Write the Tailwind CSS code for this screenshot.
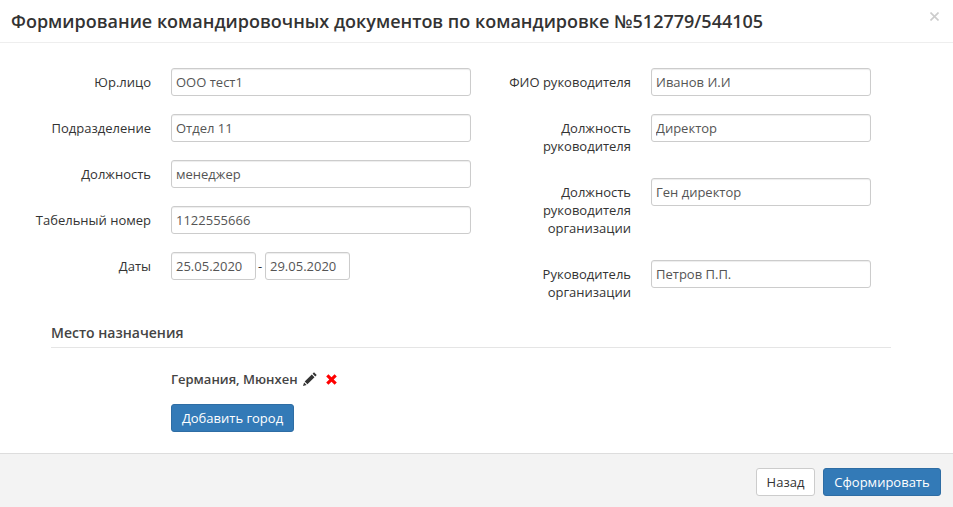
<!DOCTYPE html>
<html lang="ru">
<head>
    <meta charset="UTF-8">
    <title>Формирование командировочных документов</title>
    <script src="https://cdn.jsdelivr.net/npm/@tailwindcss/browser@4"></script>
</head>
<body class="bg-white font-['Open_Sans',sans-serif] text-[13px] leading-[18px] text-[#333] h-[507px] overflow-hidden">
    <!-- header -->
    <div class="flex justify-between h-[43px] border-b border-[#eeeeee] pl-[11px] pr-[14px]">
        <h4 class="text-[18px] leading-[42px] font-semibold text-[#333]">Формирование командировочных документов по командировке №512779/544105</h4>
        <button class="h-[9px] mt-[12px]" aria-label="Закрыть">
            <svg class="block w-[9px] h-[9px]" viewBox="0 0 9 9"><path stroke="#333" stroke-opacity="0.25" stroke-width="1.6" d="M.5.5 8.5 8.5M8.5.5.5 8.5"/></svg>
        </button>
    </div>

    <!-- body -->
    <div class="h-[410px] pt-[25px]">
        <div class="flex h-[253px]">
            <div class="w-[471px] flex flex-col gap-[18px]">
                <div class="flex gap-[20px] h-[28px]">
                    <label class="w-[151px] text-right pt-[5px]">Юр.лицо</label>
                    <input class="w-[300px] h-[28px] px-[4px] border border-[#ccc] rounded-[3px] text-[#555] shadow-[inset_0_1px_1px_rgba(0,0,0,0.075)]" value="ООО тест1">
                </div>
                <div class="flex gap-[20px] h-[28px]">
                    <label class="w-[151px] text-right pt-[5px]">Подразделение</label>
                    <input class="w-[300px] h-[28px] px-[4px] border border-[#ccc] rounded-[3px] text-[#555] shadow-[inset_0_1px_1px_rgba(0,0,0,0.075)]" value="Отдел 11">
                </div>
                <div class="flex gap-[20px] h-[28px]">
                    <label class="w-[151px] text-right pt-[5px]">Должность</label>
                    <input class="w-[300px] h-[28px] px-[4px] border border-[#ccc] rounded-[3px] text-[#555] shadow-[inset_0_1px_1px_rgba(0,0,0,0.075)]" value="менеджер">
                </div>
                <div class="flex gap-[20px] h-[28px]">
                    <label class="w-[151px] text-right pt-[5px]">Табельный номер</label>
                    <input class="w-[300px] h-[28px] px-[4px] border border-[#ccc] rounded-[3px] text-[#555] shadow-[inset_0_1px_1px_rgba(0,0,0,0.075)]" value="1122555666">
                </div>
                <div class="flex gap-[20px] h-[28px]">
                    <label class="w-[151px] text-right pt-[5px]">Даты</label>
                    <div class="flex items-center">
                        <input class="w-[85px] h-[28px] px-[4px] border border-[#ccc] rounded-[3px] text-[#555] shadow-[inset_0_1px_1px_rgba(0,0,0,0.075)]" value="25.05.2020">
                        <span class="w-[9px] pl-[2px]">-</span>
                        <input class="w-[85px] h-[28px] px-[4px] border border-[#ccc] rounded-[3px] text-[#555] shadow-[inset_0_1px_1px_rgba(0,0,0,0.075)]" value="29.05.2020">
                    </div>
                </div>
            </div>
            <div class="ml-[30px] flex flex-col gap-[18px]">
                <div class="flex gap-[20px] h-[28px]">
                    <label class="w-[130px] text-right pt-[5px]">ФИО руководителя</label>
                    <input class="w-[220px] h-[28px] px-[4px] border border-[#ccc] rounded-[3px] text-[#555] shadow-[inset_0_1px_1px_rgba(0,0,0,0.075)]" value="Иванов И.И">
                </div>
                <div class="flex gap-[20px] h-[46px]">
                    <label class="w-[130px] text-right pt-[5px]">Должность руководителя</label>
                    <input class="w-[220px] h-[28px] px-[4px] border border-[#ccc] rounded-[3px] text-[#555] shadow-[inset_0_1px_1px_rgba(0,0,0,0.075)]" value="Директор">
                </div>
                <div class="flex gap-[20px] h-[64px]">
                    <label class="w-[130px] text-right pt-[5px]">Должность руководителя организации</label>
                    <input class="w-[220px] h-[28px] px-[4px] border border-[#ccc] rounded-[3px] text-[#555] shadow-[inset_0_1px_1px_rgba(0,0,0,0.075)]" value="Ген директор">
                </div>
                <div class="flex gap-[20px] h-[46px]">
                    <label class="w-[130px] text-right pt-[5px]">Руководитель организации</label>
                    <input class="w-[220px] h-[28px] px-[4px] border border-[#ccc] rounded-[3px] text-[#555] shadow-[inset_0_1px_1px_rgba(0,0,0,0.075)]" value="Петров П.П.">
                </div>
            </div>
        </div>

        <!-- destination -->
        <div class="mx-[51px] w-[840px] h-[27px] pt-[2px] border-b border-[#e5e5e5] text-[14px] leading-[20px] font-semibold text-[#444]">Место назначения</div>
        <div class="pl-[171px] pt-[22px]">
            <div class="flex items-center h-[18px] font-semibold text-[#444]">
                <span>Германия, Мюнхен</span>
                <svg class="ml-[5px] w-[14px] h-[14px]" viewBox="0 0 14 14"><path fill="#333" d="M11 .3 13.7 3 12.3 4.4 9.6 1.7zM8.8 2.5 11.5 5.2 4.4 12.3 1.7 9.6zM1.1 10.4 3.6 12.9 0 14z"/></svg>
                <svg class="ml-[9px] w-[11px] h-[11px]" viewBox="0 0 11 11"><path fill="#f00" d="M2.4.2 5.5 3.3 8.6.2 10.8 2.4 7.7 5.5 10.8 8.6 8.6 10.8 5.5 7.7 2.4 10.8.2 8.6 3.3 5.5.2 2.4z"/></svg>
            </div>
            <button class="mt-[16px] w-[123px] h-[28px] bg-[#337ab7] border border-[#2e6da4] rounded-[3px] text-white font-medium">Добавить город</button>
        </div>
    </div>

    <!-- footer -->
    <div class="h-[54px] bg-[#f3f3f3] border-t border-[#ddd] flex justify-end items-start gap-[8px] pt-[14px] pr-[12px]">
        <button class="w-[59px] h-[28px] bg-white border border-[#ccc] rounded-[3px] text-[#333]">Назад</button>
        <button class="w-[118px] h-[28px] bg-[#337ab7] border border-[#2e6da4] rounded-[3px] text-white font-medium">Сформировать</button>
    </div>
</body>
</html>
